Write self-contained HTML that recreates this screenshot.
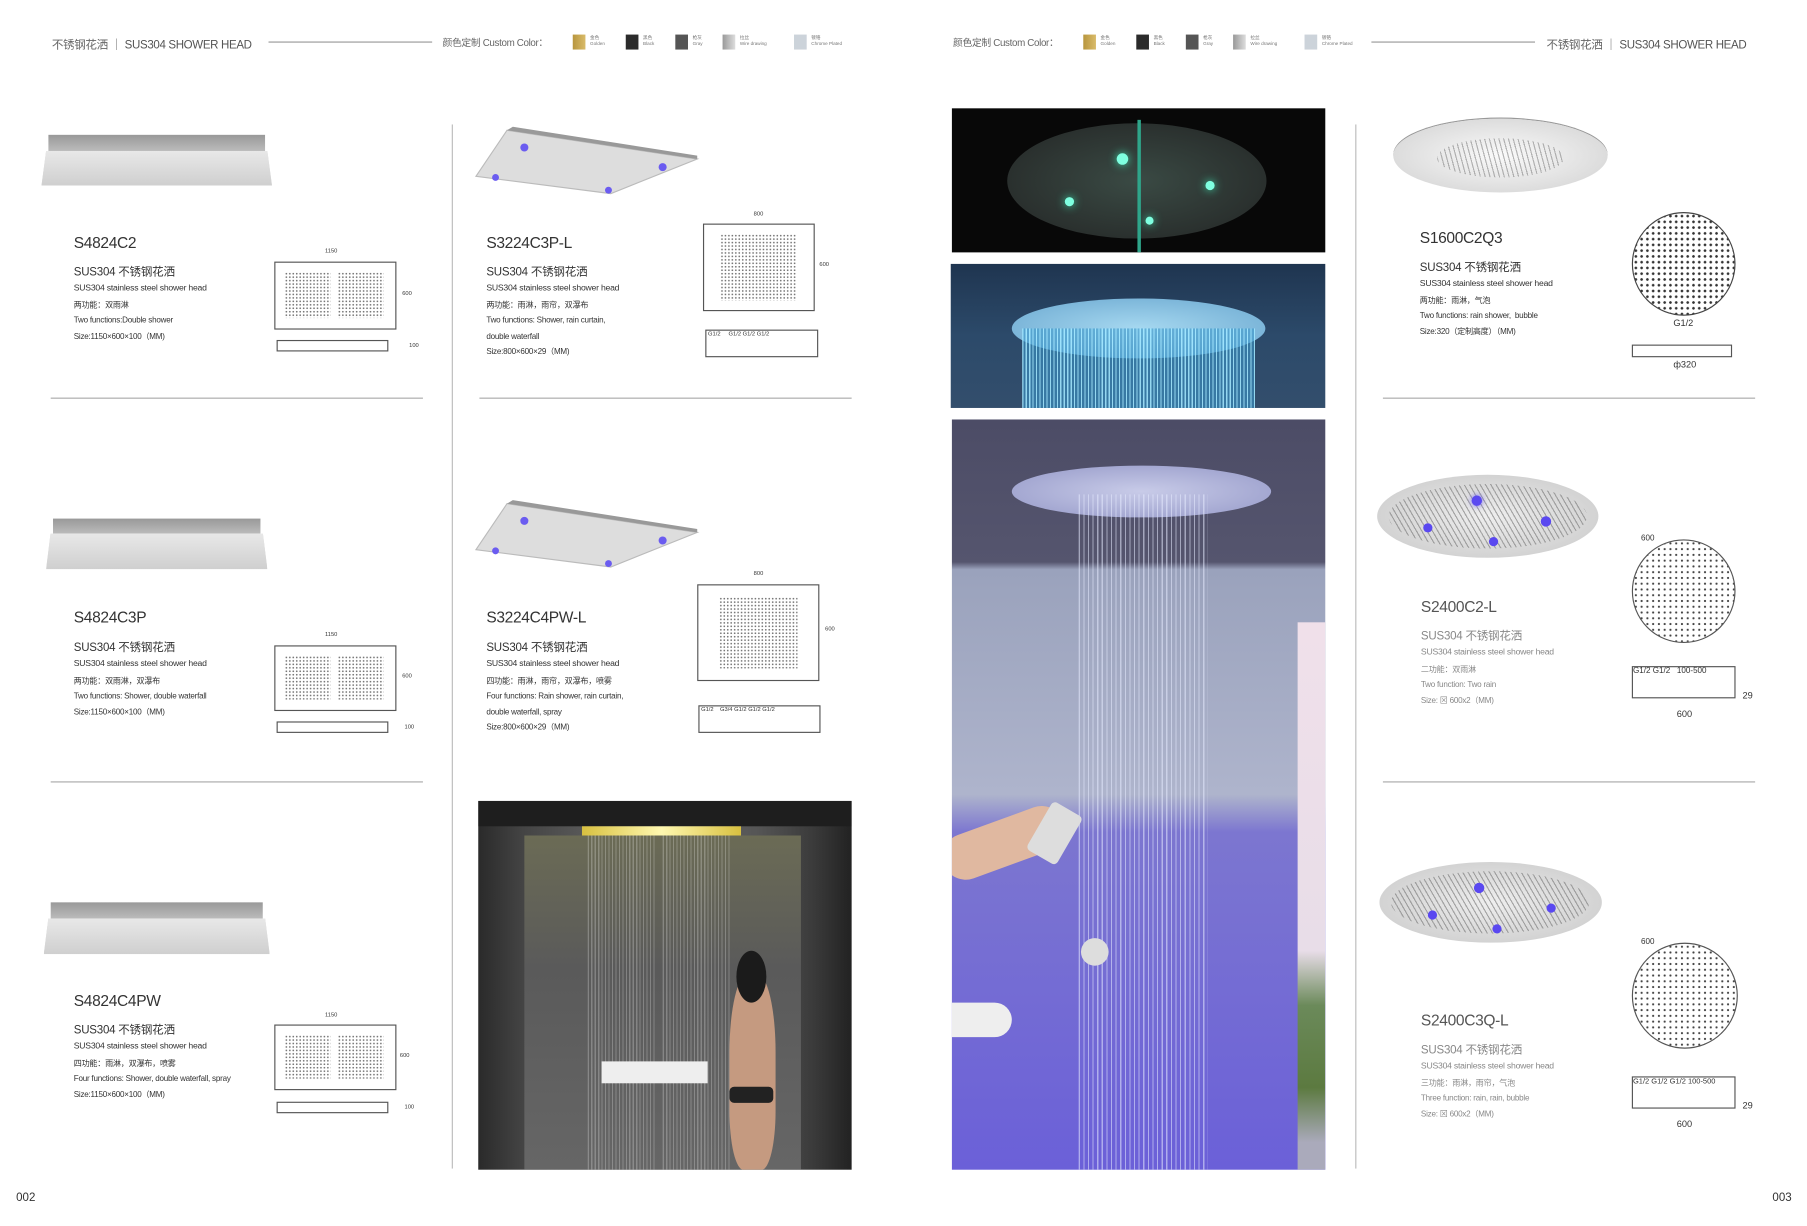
<!DOCTYPE html>
<html><head><meta charset="utf-8"><style>
html,body{margin:0;padding:0;background:#fff;width:1807px;height:1226px;overflow:hidden}
#w{position:absolute;left:0;top:0;width:1568px;height:1064px;transform:scale(1.15242);transform-origin:0 0;font-family:"Liberation Sans","Noto Sans CJK SC",sans-serif;color:#333}
.a{position:absolute}
.hl{position:absolute;height:1px;background:#aaa}
.vl{position:absolute;width:1px;background:#bbb}
.ht{font-size:10px;color:#666;white-space:nowrap;letter-spacing:-0.3px}
.ht b{font-weight:normal;color:#555}
.sw{position:absolute;width:11px;height:13px}
.sl{position:absolute;font-size:4px;color:#777;line-height:5px;white-space:nowrap}
.t{position:absolute;font-size:13.5px;color:#333;white-space:nowrap;letter-spacing:-0.3px}
.tx{position:absolute;font-size:7px;line-height:13.5px;color:#333;white-space:nowrap;letter-spacing:-0.2px}
.tx .c{font-size:10px;line-height:12px}
.tx .s{font-size:7.5px;line-height:9px;display:block;margin-bottom:5px}
.g .t{color:#555}.g .tx{color:#888}
.rect{position:absolute;border:1px solid #555;background:#fff}
.dots{background-image:radial-gradient(#777 0.6px,transparent 0.9px);background-size:3px 3px}
.dim{position:absolute;font-size:5px;color:#333}
.sh{position:absolute}
.sh .top{position:absolute;background:linear-gradient(#999,#bbb)}
.sh .plate{position:absolute;background:linear-gradient(#e8e8e8,#cfcfcf);clip-path:polygon(2% 0,98% 0,100% 100%,0 100%)}
</style></head><body><div id="w">

<div class="a ht" style="left:45px;top:30px">不锈钢花洒 ｜ <b>SUS304 SHOWER HEAD</b></div>
<div class="hl" style="left:233px;top:36px;width:142px;background:#999"></div>
<div class="a ht" style="left:384px;top:31px;font-size:8.5px">颜色定制 Custom Color：</div>
<div class="sw" style="left:497px;top:30px;background:linear-gradient(90deg,#b8963e,#d9bb6a)"></div><div class="sl" style="left:512px;top:30px">金色<br>Golden</div>
<div class="sw" style="left:543px;top:30px;background:#2b2b2b"></div><div class="sl" style="left:558px;top:30px">黑色<br>Black</div>
<div class="sw" style="left:586px;top:30px;background:#555"></div><div class="sl" style="left:601px;top:30px">枪灰<br>Gray</div>
<div class="sw" style="left:627px;top:30px;background:linear-gradient(90deg,#999,#ddd)"></div><div class="sl" style="left:642px;top:30px">拉丝<br>Wire drawing</div>
<div class="sw" style="left:689px;top:30px;background:#ccd3da"></div><div class="sl" style="left:704px;top:30px">镀铬<br>Chrome Plated</div>

<div class="a ht" style="left:827px;top:31px;font-size:8.5px">颜色定制 Custom Color：</div>
<div class="sw" style="left:940px;top:30px;background:linear-gradient(90deg,#b8963e,#d9bb6a)"></div><div class="sl" style="left:955px;top:30px">金色<br>Golden</div>
<div class="sw" style="left:986px;top:30px;background:#2b2b2b"></div><div class="sl" style="left:1001px;top:30px">黑色<br>Black</div>
<div class="sw" style="left:1029px;top:30px;background:#555"></div><div class="sl" style="left:1044px;top:30px">枪灰<br>Gray</div>
<div class="sw" style="left:1070px;top:30px;background:linear-gradient(90deg,#999,#ddd)"></div><div class="sl" style="left:1085px;top:30px">拉丝<br>Wire drawing</div>
<div class="sw" style="left:1132px;top:30px;background:#ccd3da"></div><div class="sl" style="left:1147px;top:30px">镀铬<br>Chrome Plated</div>
<div class="hl" style="left:1190px;top:36px;width:142px;background:#999"></div>
<div class="a ht" style="left:1342px;top:30px">不锈钢花洒 ｜ <b>SUS304 SHOWER HEAD</b></div>

<div class="vl" style="left:392px;top:108px;height:906px"></div>
<div class="vl" style="left:1176px;top:108px;height:906px"></div>
<div class="hl" style="left:44px;top:345px;width:323px"></div>
<div class="hl" style="left:44px;top:678px;width:323px"></div>
<div class="hl" style="left:416px;top:345px;width:323px"></div>
<div class="hl" style="left:1200px;top:345px;width:323px"></div>
<div class="hl" style="left:1200px;top:678px;width:323px"></div>

<div class="sh" style="left:36px;top:117px;width:200px;height:44px"><div class="top" style="left:6px;top:0;width:188px;height:14px"></div><div class="plate dots" style="left:0;top:14px;width:200px;height:30px;background-color:#ddd"></div></div>
<div class="t" style="left:64px;top:203px">S4824C2</div>
<div class="tx" style="left:64px;top:231px"><span class="c">SUS304 不锈钢花洒</span><span class="s">SUS304 stainless steel shower head</span>两功能：双雨淋<br>Two functions:Double shower<br>Size:1150×600×100（MM)</div>
<div class="dim" style="left:282px;top:215px">1150</div><div class="rect" style="left:238px;top:227px;width:104px;height:57px"><div class="dots" style="position:absolute;left:8px;top:8px;width:40px;height:40px"></div><div class="dots" style="position:absolute;left:54px;top:8px;width:40px;height:40px"></div></div><div class="dim" style="left:349px;top:252px">600</div>
<div class="rect" style="left:240px;top:295px;width:95px;height:8px"></div><div class="dim" style="left:355px;top:297px">100</div>

<div class="sh" style="left:40px;top:450px;width:192px;height:44px"><div class="top" style="left:6px;top:0;width:180px;height:13px"></div><div class="plate dots" style="left:0;top:13px;width:192px;height:31px;background-color:#ddd"></div></div>
<div class="t" style="left:64px;top:528px">S4824C3P</div>
<div class="tx" style="left:64px;top:557px"><span class="c">SUS304 不锈钢花洒</span><span class="s">SUS304 stainless steel shower head</span>两功能：双雨淋，双瀑布<br>Two functions: Shower, double waterfall<br>Size:1150×600×100（MM)</div>
<div class="dim" style="left:282px;top:548px">1150</div><div class="rect" style="left:238px;top:560px;width:104px;height:55px"><div class="dots" style="position:absolute;left:8px;top:8px;width:40px;height:38px"></div><div class="dots" style="position:absolute;left:54px;top:8px;width:40px;height:38px"></div></div><div class="dim" style="left:349px;top:584px">600</div>
<div class="rect" style="left:240px;top:626px;width:95px;height:8px"></div><div class="dim" style="left:351px;top:628px">100</div>

<div class="sh" style="left:38px;top:783px;width:196px;height:45px"><div class="top" style="left:6px;top:0;width:184px;height:14px"></div><div class="plate dots" style="left:0;top:14px;width:196px;height:31px;background-color:#ddd"></div></div>
<div class="t" style="left:64px;top:861px">S4824C4PW</div>
<div class="tx" style="left:64px;top:889px"><span class="c">SUS304 不锈钢花洒</span><span class="s">SUS304 stainless steel shower head</span>四功能：雨淋，双瀑布，喷雾<br>Four functions: Shower, double waterfall, spray<br>Size:1150×600×100（MM)</div>
<div class="dim" style="left:282px;top:878px">1150</div><div class="rect" style="left:238px;top:889px;width:104px;height:55px"><div class="dots" style="position:absolute;left:8px;top:8px;width:40px;height:38px"></div><div class="dots" style="position:absolute;left:54px;top:8px;width:40px;height:38px"></div></div><div class="dim" style="left:347px;top:913px">600</div>
<div class="rect" style="left:240px;top:956px;width:95px;height:8px"></div><div class="dim" style="left:351px;top:958px">100</div>

<svg class="a" style="left:405px;top:108px" width="205" height="65"><polygon points="8,45 35,5 200,30 125,60" fill="#ddd" stroke="#bbb"/><polygon points="35,5 40,2 200,27 200,30" fill="#999"/><circle cx="50" cy="20" r="3.5" fill="#6b5cf0"/><circle cx="170" cy="37" r="3.5" fill="#6b5cf0"/><circle cx="25" cy="46" r="3" fill="#6b5cf0"/><circle cx="123" cy="57" r="3" fill="#6b5cf0"/></svg>
<div class="t" style="left:422px;top:203px">S3224C3P-L</div>
<div class="tx" style="left:422px;top:231px"><span class="c">SUS304 不锈钢花洒</span><span class="s">SUS304 stainless steel shower head</span>两功能：雨淋，雨帘，双瀑布<br>Two functions: Shower, rain curtain,<br>double waterfall<br>Size:800×600×29（MM)</div>
<div class="dim" style="left:654px;top:183px">800</div><div class="rect" style="left:610px;top:194px;width:95px;height:74px"><div class="dots" style="position:absolute;left:14px;top:8px;width:66px;height:58px"></div></div><div class="dim" style="left:711px;top:227px">600</div>
<div class="rect" style="left:612px;top:286px;width:96px;height:22px;font-size:5px">&nbsp;G1/2&nbsp;&nbsp;&nbsp;&nbsp;&nbsp;G1/2 G1/2 G1/2</div>

<svg class="a" style="left:405px;top:432px" width="205" height="65"><polygon points="8,45 35,5 200,30 125,60" fill="#ddd" stroke="#bbb"/><polygon points="35,5 40,2 200,27 200,30" fill="#999"/><circle cx="50" cy="20" r="3.5" fill="#6b5cf0"/><circle cx="170" cy="37" r="3.5" fill="#6b5cf0"/><circle cx="25" cy="46" r="3" fill="#6b5cf0"/><circle cx="123" cy="57" r="3" fill="#6b5cf0"/></svg>
<div class="t" style="left:422px;top:528px">S3224C4PW-L</div>
<div class="tx" style="left:422px;top:557px"><span class="c">SUS304 不锈钢花洒</span><span class="s">SUS304 stainless steel shower head</span>四功能：雨淋，雨帘，双瀑布，喷雾<br>Four functions: Rain shower, rain curtain,<br>double waterfall, spray<br>Size:800×600×29（MM)</div>
<div class="dim" style="left:654px;top:495px">800</div><div class="rect" style="left:605px;top:507px;width:104px;height:82px"><div class="dots" style="position:absolute;left:18px;top:10px;width:68px;height:62px"></div></div><div class="dim" style="left:716px;top:543px">600</div>
<div class="rect" style="left:606px;top:612px;width:104px;height:22px;font-size:5px">&nbsp;G1/2&nbsp;&nbsp;&nbsp;&nbsp;G3/4 G1/2 G1/2 G1/2</div>

<div class="a" style="left:415px;top:695px;width:324px;height:320px;overflow:hidden;background:linear-gradient(90deg,#2a2a2a 0,#444 12%,#5a5a5a 30%,#6a6a6a 50%,#555 75%,#3a3a3a 90%,#222 100%)">
 <div class="a" style="left:0;top:0;width:324px;height:22px;background:#1e1e1e"></div>
 <div class="a" style="left:90px;top:22px;width:138px;height:8px;background:linear-gradient(90deg,#d8c040,#fff8b0,#d8c040)"></div>
 <div class="a" style="left:40px;top:30px;width:240px;height:290px;background:linear-gradient(#6b6b55,#5a5a5a 40%,#666 100%)"></div>
 <div class="a" style="left:95px;top:30px;width:60px;height:290px;background:repeating-linear-gradient(90deg,rgba(255,255,255,.35) 0 1px,transparent 1px 3px);opacity:.7"></div>
 <div class="a" style="left:160px;top:30px;width:60px;height:290px;background:repeating-linear-gradient(90deg,rgba(255,255,255,.35) 0 1px,transparent 1px 3px);opacity:.7"></div>
 <div class="a" style="left:107px;top:226px;width:92px;height:19px;background:#eee"></div>
 <div class="a" style="left:218px;top:150px;width:40px;height:170px;background:#c59a80;border-radius:40% 40% 30% 30%"></div>
 <div class="a" style="left:224px;top:130px;width:26px;height:45px;background:#1b1b1b;border-radius:50%"></div>
 <div class="a" style="left:218px;top:248px;width:38px;height:14px;background:#222;border-radius:4px"></div>
</div>

<div class="a" style="left:826px;top:94px;width:324px;height:125px;overflow:hidden;background:#080808">
 <div class="a" style="left:48px;top:13px;width:225px;height:100px;border-radius:50%;background:radial-gradient(#3a4a44,#2a302e 70%,#202423)"></div>
 <div class="a" style="left:161px;top:10px;width:3px;height:115px;background:#2fa58a"></div>
 <div class="a" style="left:143px;top:39px;width:10px;height:10px;border-radius:50%;background:#7fffe0;box-shadow:0 0 8px #3fe0b0"></div>
 <div class="a" style="left:220px;top:63px;width:8px;height:8px;border-radius:50%;background:#7fffe0;box-shadow:0 0 8px #3fe0b0"></div>
 <div class="a" style="left:98px;top:77px;width:8px;height:8px;border-radius:50%;background:#7fffe0;box-shadow:0 0 8px #3fe0b0"></div>
 <div class="a" style="left:168px;top:94px;width:7px;height:7px;border-radius:50%;background:#7fffe0;box-shadow:0 0 8px #3fe0b0"></div>
</div>
<div class="a" style="left:825px;top:229px;width:325px;height:125px;overflow:hidden;background:linear-gradient(#1f3550,#2c4a6a 50%,#334e6c)">
 <div class="a" style="left:53px;top:30px;width:220px;height:52px;border-radius:50%;background:radial-gradient(#a6d8f0,#6ba8d0)"></div>
 <div class="a" style="left:62px;top:56px;width:202px;height:69px;background:repeating-linear-gradient(90deg,rgba(160,230,255,.9) 0 1px,rgba(60,150,200,.6) 1px 3px)"></div>
</div>
<div class="a" style="left:826px;top:364px;width:324px;height:651px;overflow:hidden;background:linear-gradient(#4c4c66 0,#55556e 19%,#9aa2bc 20%,#aeb4cc 50%,#7c76d0 55%,#6b60d8 100%)">
 <div class="a" style="left:300px;top:176px;width:24px;height:475px;background:linear-gradient(#f0e0ea,#e8dde8 60%,#6b8a5a 70%,#5c7a40 85%,#aab 95%)"></div>
 <div class="a" style="left:52px;top:40px;width:225px;height:45px;border-radius:50%;background:radial-gradient(#c8cbe8,#9599c8)"></div>
 <div class="a" style="left:110px;top:65px;width:112px;height:586px;background:repeating-linear-gradient(90deg,rgba(230,235,255,.55) 0 1px,transparent 1px 4px)"></div>
 <div class="a" style="left:0;top:365px;width:110px;height:40px;background:#e0b8a0;transform:rotate(-20deg);transform-origin:left bottom;border-radius:20px"></div>
 <div class="a" style="left:74px;top:335px;width:30px;height:48px;background:#ddd;transform:rotate(30deg);border-radius:4px"></div>
 <div class="a" style="left:0;top:506px;width:52px;height:30px;background:#eee;border-radius:0 15px 15px 0"></div>
 <div class="a" style="left:112px;top:450px;width:24px;height:24px;border-radius:50%;background:#ddd"></div>
</div>

<div class="a" style="left:1209px;top:103px;width:186px;height:64px;border-radius:50%;background:radial-gradient(#fafafa,#d8d8d8 80%,#bbb);box-shadow:0 -1px 0 #999"><div class="a" style="left:38px;top:17px;width:110px;height:34px;border-radius:50%;background:repeating-linear-gradient(75deg,#888 0 1px,transparent 1px 4px);opacity:.6"></div></div>
<div class="t" style="left:1232px;top:199px">S1600C2Q3</div>
<div class="tx" style="left:1232px;top:227px"><span class="c">SUS304 不锈钢花洒</span><span class="s">SUS304 stainless steel shower head</span>两功能：雨淋，气泡<br>Two functions: rain shower,&nbsp; bubble<br>Size:320（定制高度）（MM)</div>
<div class="a dots" style="left:1416px;top:184px;width:88px;height:88px;border-radius:50%;border:1px solid #444;background-size:5px 5px;background-image:radial-gradient(#333 1px,transparent 1.3px)"></div>
<div class="dim" style="left:1452px;top:276px;font-size:8px">G1/2</div>
<div class="rect" style="left:1416px;top:299px;width:85px;height:9px"></div>
<div class="dim" style="left:1452px;top:312px;font-size:8px">ф320</div>

<div class="a" style="left:1195px;top:412px;width:192px;height:72px;border-radius:50%;background:radial-gradient(#eee,#cfcfcf 80%,#aaa)"><div class="a" style="left:10px;top:8px;width:172px;height:56px;border-radius:50%;background:repeating-linear-gradient(60deg,#777 0 1px,transparent 1px 4px);opacity:.6"></div>
<div class="a" style="left:82px;top:18px;width:9px;height:9px;border-radius:50%;background:#5a48f0;box-shadow:0 0 5px #6b5cf0"></div><div class="a" style="left:142px;top:36px;width:9px;height:9px;border-radius:50%;background:#5a48f0"></div><div class="a" style="left:40px;top:42px;width:8px;height:8px;border-radius:50%;background:#5a48f0"></div><div class="a" style="left:97px;top:54px;width:8px;height:8px;border-radius:50%;background:#5a48f0"></div></div>
<div class="g"><div class="t" style="left:1233px;top:519px">S2400C2-L</div>
<div class="tx" style="left:1233px;top:547px"><span class="c">SUS304 不锈钢花洒</span><span class="s">SUS304 stainless steel shower head</span>二功能：双雨淋<br>Two function: Two rain<br>Size: ⊠ 600x2（MM)</div></div>
<div class="dim" style="left:1424px;top:464px;font-size:7px">600</div>
<div class="a" style="left:1416px;top:468px;width:88px;height:88px;border-radius:50%;border:1px solid #555;background-size:5px 5px;background-image:radial-gradient(#444 .8px,transparent 1.1px)"></div>
<div class="rect" style="left:1416px;top:578px;width:88px;height:26px;font-size:7px">G1/2 G1/2 &nbsp;&nbsp;100-500</div>
<div class="dim" style="left:1512px;top:599px;font-size:8px">29</div><div class="dim" style="left:1455px;top:615px;font-size:8px">600</div>

<div class="a" style="left:1197px;top:748px;width:193px;height:70px;border-radius:50%;background:radial-gradient(#eee,#cfcfcf 80%,#aaa)"><div class="a" style="left:10px;top:8px;width:172px;height:54px;border-radius:50%;background:repeating-linear-gradient(60deg,#777 0 1px,transparent 1px 4px);opacity:.6"></div>
<div class="a" style="left:82px;top:18px;width:9px;height:9px;border-radius:50%;background:#5a48f0"></div><div class="a" style="left:145px;top:36px;width:8px;height:8px;border-radius:50%;background:#5a48f0"></div><div class="a" style="left:42px;top:42px;width:8px;height:8px;border-radius:50%;background:#5a48f0"></div><div class="a" style="left:98px;top:54px;width:8px;height:8px;border-radius:50%;background:#5a48f0"></div></div>
<div class="g"><div class="t" style="left:1233px;top:878px">S2400C3Q-L</div>
<div class="tx" style="left:1233px;top:906px"><span class="c">SUS304 不锈钢花洒</span><span class="s">SUS304 stainless steel shower head</span>三功能：雨淋，雨帘，气泡<br>Three function: rain, rain, bubble<br>Size: ⊠ 600x2（MM)</div></div>
<div class="dim" style="left:1424px;top:814px;font-size:7px">600</div>
<div class="a" style="left:1416px;top:818px;width:90px;height:90px;border-radius:50%;border:1px solid #555;background-size:5px 5px;background-image:radial-gradient(#444 .8px,transparent 1.1px)"></div>
<div class="rect" style="left:1416px;top:934px;width:88px;height:26px;font-size:6.5px;white-space:nowrap">G1/2 G1/2 G1/2 100-500</div>
<div class="dim" style="left:1512px;top:955px;font-size:8px">29</div><div class="dim" style="left:1455px;top:971px;font-size:8px">600</div>

<div class="a" style="left:14px;top:1034px;font-size:10px;color:#333">002</div>
<div class="a" style="left:1538px;top:1034px;font-size:10px;color:#333">003</div>
</div></body></html>
